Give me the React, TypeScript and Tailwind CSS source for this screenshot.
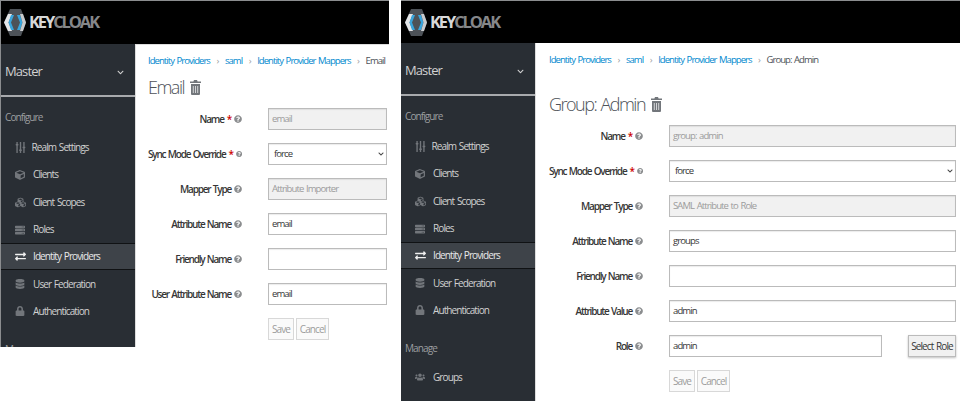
import {
  FaChevronDown,
  FaCube,
  FaCubes,
  FaDatabase,
  FaExchangeAlt,
  FaLock,
  FaQuestionCircle,
  FaServer,
  FaSlidersH,
  FaUsers,
} from "react-icons/fa";
import type { ReactNode } from "react";

type Field = {
  label: string;
  required?: boolean;
  value: string;
  kind?: "input" | "disabled" | "select" | "role";
};

const Logo = () => (
  <div className="flex items-center">
    <svg width="22" height="27" viewBox="0 0 22 27" className="shrink-0">
      <polygon points="6,0 17,0 22,13.5 17,27 6,27 0,13.5" fill="#4d5258" />
      <polygon points="0,13.5 4,5 8,5 4.5,13.5 8,22 4,22" fill="#e4e6e8" />
      <polygon points="7,6 10,6 7,13.5 10,21 7,21 4.5,13.5" fill="#39a5dc" />
      <polygon points="13,6 16,6 18.5,13.5 16,21 13,21 16,13.5" fill="#39a5dc" />
      <polygon points="16,5 19,5 22,13.5 19,22 16,22 18.5,13.5" fill="#c9cbcd" />
    </svg>
    <span className="ml-[3px] text-[16.5px] leading-none font-bold tracking-[-2.1px] text-[#d8d8d8]">
      KEY<span className="text-[#85878a]">CLOAK</span>
    </span>
  </div>
);

const TrashIcon = () => (
  <svg width="11" height="15" viewBox="0 0 11 15" className="shrink-0">
    <path
      d="M4 0h3l.6 1.5H11V3H0V1.500h3.400zM1 4h9v10a1 1 0 0 1-1 1H2a1 1 0 0 1-1-1z"
      fill="#72767b"
    />
    <path d="M3.300 6v7M5.500 6v7M7.700 6v7" stroke="#fff" strokeWidth="0.7" />
  </svg>
);

const NavRow = ({
  icon,
  label,
  active,
  iconW = "w-[18px]",
}: {
  icon: ReactNode;
  label?: string;
  active?: boolean;
  iconW?: string;
}) => (
  <div
    className={`flex h-[27.3px] items-center pl-[14px] text-[10px] whitespace-nowrap ${
      active
        ? "border-y border-[#101214] bg-[#3e4349] text-[#e8e8e8]"
        : "text-[#d1d1d1]"
    }`}
  >
    <span
      className={`flex shrink-0 ${iconW} ${active ? "text-[#f0f0f0]" : "text-[#72767b]"}`}
    >
      {icon}
    </span>
    {label && <span>{label}</span>}
  </div>
);

const Sidebar = ({ manage }: { manage?: boolean }) => (
  <aside className="w-[134px] shrink-0 overflow-hidden bg-[#292e34]">
    <div className="flex h-[53px] items-center justify-between border-b-2 border-[#a8aaad] pt-[5px] pr-[11px] pl-[4px] text-[#d1d1d1]">
      <span className="text-[13px]">Master</span>
      <FaChevronDown size={7} />
    </div>
    <div className="mt-[14px] pl-[4px] text-[10px] leading-[13px] text-[#9c9ea0]">
      Configure
    </div>
    <div className="mt-[10px]">
      <NavRow
        label="Realm Settings"
        iconW="w-[16.500px]"
        icon={<FaSlidersH size={11} className="rotate-90" />}
      />
      <NavRow label="Clients" icon={<FaCube size={10} />} />
      <NavRow label="Client Scopes" icon={<FaCubes size={11} />} />
      <NavRow label="Roles" icon={<FaServer size={10} />} />
      <NavRow label="Identity Providers" active icon={<FaExchangeAlt size={11} />} />
      <NavRow label="User Federation" icon={<FaDatabase size={10} />} />
      <NavRow label="Authentication" icon={<FaLock size={10} />} />
    </div>
    <div className="mt-[17.5px] pl-[4px] text-[10px] leading-[13px] text-[#9c9ea0]">
      Manage
    </div>
    {manage && (
      <div className="mt-[9px]">
        <NavRow label="Groups" icon={<FaUsers size={10} />} />
        <NavRow icon={<FaUsers size={10} />} />
      </div>
    )}
  </aside>
);

const Crumbs = ({ current }: { current: string }) => (
  <div className="flex h-[14px] items-center text-[9.5px] tracking-[-0.1em] whitespace-nowrap">
    <span className="text-[#0088ce]">Identity Providers</span>
    <span className="w-[15px] text-center text-[#9c9ea0]">›</span>
    <span className="text-[#0088ce]">saml</span>
    <span className="w-[15px] text-center text-[#9c9ea0]">›</span>
    <span className="text-[#0088ce]">Identity Provider Mappers</span>
    <span className="w-[15px] text-center text-[#9c9ea0]">›</span>
    <span className="text-[#4d5258]">{current}</span>
  </div>
);

const Row = ({ field }: { field: Field }) => {
  const kind = field.kind ?? "input";
  const box =
    "h-[22px] w-full border border-[#bbb] px-[3px] text-[9.5px] leading-[20px] whitespace-nowrap shadow-[inset_0_1px_1px_rgba(0,0,0,0.08)]";
  return (
    <div className="flex items-center">
      <div className="flex w-[94px] shrink-0 items-center justify-end gap-[3px] text-[10px] font-semibold tracking-[-0.12em] whitespace-nowrap text-[#363636]">
        <span>{field.label}</span>
        {field.required && <span className="text-[#c00]">*</span>}
        <FaQuestionCircle size={8} className="text-[#8b8d8f]" />
      </div>
      <div className="ml-[26px] flex min-w-0 flex-1 items-center">
        {kind === "select" && (
          <div className={`${box} flex items-center justify-between bg-white pr-[2px] pl-[5px] text-[#363636]`}>
            <span>{field.value}</span>
            <FaChevronDown size={6} className="text-[#444]" />
          </div>
        )}
        {kind === "disabled" && (
          <div className={`${box} bg-[#f1f1f1] text-[#9c9c9c]`}>{field.value}</div>
        )}
        {kind === "input" && (
          <div className={`${box} bg-white text-[#363636]`}>{field.value}</div>
        )}
        {kind === "role" && (
          <>
            <div className={`${box} bg-white text-[#363636]`}>{field.value}</div>
            <div className="ml-[26px] flex h-[22px] w-[48px] shrink-0 items-center justify-center border border-[#bbb] bg-[#f1f1f1] text-[10px] whitespace-nowrap text-[#363636] shadow-[0_1px_2px_rgba(0,0,0,0.25)]">
              Select Role
            </div>
          </>
        )}
      </div>
    </div>
  );
};

const Buttons = () => (
  <div className="ml-[120px] flex gap-[2px] text-[10px] text-[#9c9c9c]">
    <div className="flex h-[22px] w-[26px] items-center justify-center border border-[#d8d8d8] bg-[#fafafa]">
      Save
    </div>
    <div className="flex h-[22px] w-[33px] items-center justify-center border border-[#d8d8d8] bg-[#fafafa]">
      Cancel
    </div>
  </div>
);

const Title = ({ text }: { text: string }) => (
  <div className="flex items-center gap-[6px] text-[#4d5258]">
    <span className="text-[18px] leading-[24px] font-light tracking-[-1.5px] whitespace-nowrap">
      {text}
    </span>
    <TrashIcon />
  </div>
);

const emailFields: Field[] = [
  { label: "Name", required: true, value: "email", kind: "disabled" },
  { label: "Sync Mode Override", required: true, value: "force", kind: "select" },
  { label: "Mapper Type", value: "Attribute Importer", kind: "disabled" },
  { label: "Attribute Name", value: "email" },
  { label: "Friendly Name", value: "" },
  { label: "User Attribute Name", value: "email" },
];

const groupFields: Field[] = [
  { label: "Name", required: true, value: "group: admin", kind: "disabled" },
  { label: "Sync Mode Override", required: true, value: "force", kind: "select" },
  { label: "Mapper Type", value: "SAML Attribute to Role", kind: "disabled" },
  { label: "Attribute Name", value: "groups" },
  { label: "Friendly Name", value: "" },
  { label: "Attribute Value", value: "admin" },
  { label: "Role", value: "admin", kind: "role" },
];

export default function App() {
  return (
    <div className="flex h-[401px] w-[960px] items-start overflow-hidden bg-white font-['Open_Sans',sans-serif] tracking-[-0.9px] [word-spacing:1px]">
      <div className="h-[347px] w-[389px] shrink-0 border-l border-[#8b8d8f]">
        <div className="flex h-[44px] items-center border-t border-[#8b8d8f] bg-black pl-[3px]">
          <Logo />
        </div>
        <div className="flex h-[303px]">
          <Sidebar />
          <main className="min-w-0 flex-1 border-t border-l border-[#ddd] pt-[9px] pr-[2px] pl-[12px]">
            <Crumbs current="Email" />
            <div className="mt-[7px]">
              <Title text="Email" />
            </div>
            <div className="mt-[9px] flex flex-col gap-[13px]">
              {emailFields.map((f) => (
                <Row key={f.label} field={f} />
              ))}
            </div>
            <div className="mt-[13px]">
              <Buttons />
            </div>
          </main>
        </div>
      </div>
      <div className="ml-[12px] h-[401px] min-w-0 flex-1">
        <div className="flex h-[43px] items-center border-t border-[#8b8d8f] bg-black pl-[4px]">
          <Logo />
        </div>
        <div className="flex h-[358px]">
          <Sidebar manage />
          <main className="min-w-0 flex-1 border-l border-[#ddd] pt-[10px] pr-[4px] pl-[13px]">
            <Crumbs current="Group: Admin" />
            <div className="mt-[25px]">
              <Title text="Group: Admin" />
            </div>
            <div className="mt-[9px] flex flex-col gap-[13px]">
              {groupFields.map((f) => (
                <Row key={f.label} field={f} />
              ))}
            </div>
            <div className="mt-[13px]">
              <Buttons />
            </div>
          </main>
        </div>
      </div>
    </div>
  );
}
